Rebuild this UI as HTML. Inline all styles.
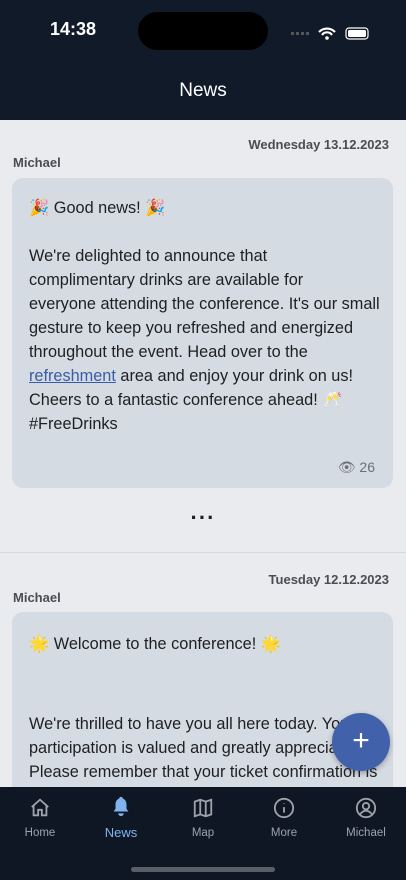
<!DOCTYPE html>
<html><head><meta charset="utf-8"><style>
*{margin:0;padding:0;box-sizing:border-box}
body{width:406px;height:880px;overflow:hidden;background:#e9ebee;font-family:"Liberation Sans",sans-serif;position:relative;color:#1d1f22}
.hdr{position:absolute;left:0;top:0;width:406px;height:120px;background:#111a28;color:#fff}
.time{position:absolute;left:50px;top:19px;font-size:18px;font-weight:bold}
.island{position:absolute;left:138px;top:12px;width:130px;height:38px;background:#000;border-radius:19px}
.title{position:absolute;width:100%;top:80px;text-align:center;font-size:19px}
.date{position:absolute;right:17px;font-size:13px;font-weight:bold;color:#4a4d52}
.name{position:absolute;left:13px;font-size:13px;font-weight:bold;color:#4a4d52}
.card{position:absolute;left:12px;width:381px;background:#d5dbe2;border-radius:11px;padding:18px 17px;font-size:16.3px;line-height:24px;white-space:nowrap;overflow:hidden}
a{color:#3a5ba8}
.tab{position:absolute;left:0;top:787px;width:406px;height:93px;background:#0f1724}
.ti{position:absolute;top:10px;width:80px;text-align:center;font-size:11.5px;color:#9ea3ab}
.ti svg{display:block;margin:0 auto 8px}
</style></head><body>
<div class="hdr"><div class="time">14:38</div><div class="island"></div>
<svg style="position:absolute;left:291px;top:27px" width="80" height="14"><g fill="#555"><rect x="0" y="5" width="3" height="3"/><rect x="5" y="5" width="3" height="3"/><rect x="10" y="5" width="3" height="3"/><rect x="15" y="5" width="3" height="3"/></g><path d="M28 5a11 11 0 0 1 16 0M31 8a6 6 0 0 1 10 0" stroke="#fff" stroke-width="2.2" fill="none"/><circle cx="36" cy="11" r="1.8" fill="#fff"/><rect x="55" y="1" width="22" height="11" rx="3" fill="none" stroke="#fff" stroke-width="1.2"/><rect x="57" y="3" width="18" height="7" rx="1.5" fill="#fff"/></svg>
<div class="title">News</div></div>
<div class="date" style="top:137px">Wednesday 13.12.2023</div>
<div class="name" style="top:155px">Michael</div>
<div class="card" style="top:178px;height:310px">🎉 Good news! 🎉<br><br>We're delighted to announce that<br>complimentary drinks are available for<br>everyone attending the conference. It's our small<br>gesture to keep you refreshed and energized<br>throughout the event. Head over to the<br><a href="#x">refreshment</a> area and enjoy your drink on us!<br>Cheers to a fantastic conference ahead! 🥂<br>#FreeDrinks
<div style="position:absolute;right:18px;bottom:9px;font-size:14px;color:#6b7078">👁 26</div></div>
<div style="position:absolute;left:0;width:406px;top:505px;text-align:center;font-size:22px;font-weight:bold;letter-spacing:1px">···</div>
<div style="position:absolute;left:0;top:552px;width:406px;height:1px;background:#d6d9dd"></div>
<div class="date" style="top:572px">Tuesday 12.12.2023</div>
<div class="name" style="top:590px">Michael</div>
<div class="card" style="top:612px;height:200px;padding-top:20px">🌟 Welcome to the conference! 🌟<div style="height:56px"></div>We're thrilled to have you all here today. Your<br>participation is valued and greatly appreciated.<br>Please remember that your ticket confirmation is</div>
<div style="position:absolute;left:332px;top:713px;width:58px;height:58px;border-radius:50%;background:#4162aa;color:#fff;font-size:30px;text-align:center;line-height:56px;box-shadow:0 2px 6px rgba(0,0,0,.3)">+</div>
<div class="tab">
<div class="ti" style="left:0"><svg width="22" height="22" viewBox="0 0 24 24" fill="none" stroke="#9ea3ab" stroke-width="2"><path d="M3 11L12 3l9 8M5 9v11h5v-6h4v6h5V9"/></svg>Home</div>
<div class="ti" style="left:81px;color:#7fb4ef;top:8px;font-size:13px"><svg width="22" height="22" viewBox="0 0 24 24" fill="#7fb4ef"><path d="M12 2a2 2 0 0 1 2 2c3 1 4 3.5 4 7v4l2 3H4l2-3v-4c0-3.5 1-6 4-7a2 2 0 0 1 2-2zM9 20h6a3 3 0 0 1-6 0z"/></svg>News</div>
<div class="ti" style="left:163px"><svg width="22" height="22" viewBox="0 0 24 24" fill="none" stroke="#9ea3ab" stroke-width="2"><path d="M3 5l6-2 6 2 6-2v16l-6 2-6-2-6 2zM9 3v16M15 5v16"/></svg>Map</div>
<div class="ti" style="left:244px"><svg width="22" height="22" viewBox="0 0 24 24" fill="none" stroke="#9ea3ab" stroke-width="2"><circle cx="12" cy="12" r="10"/><path d="M12 11v6M12 7v.5"/></svg>More</div>
<div class="ti" style="left:326px"><svg width="22" height="22" viewBox="0 0 24 24" fill="none" stroke="#9ea3ab" stroke-width="2"><circle cx="12" cy="12" r="10"/><circle cx="12" cy="10" r="3.5"/><path d="M5.5 19c2-3 4-4 6.5-4s4.5 1 6.5 4"/></svg>Michael</div>
<div style="position:absolute;left:131px;top:80px;width:144px;height:5px;border-radius:3px;background:#5a5e66"></div>
</div>
</body></html>
